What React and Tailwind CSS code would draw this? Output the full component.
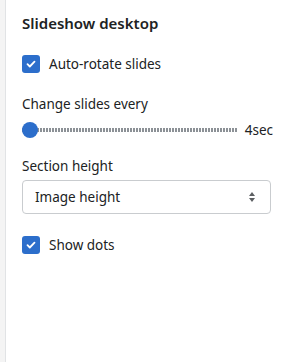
const Check = () => (
  <span className="flex h-[18px] w-[18px] items-center justify-center rounded-[3px] bg-[#2c6ecb]">
    <svg width="12" height="12" viewBox="0 0 12 12" fill="none">
      <path d="M2.5 6.2l2.3 2.3 4.7-4.8" stroke="white" strokeWidth="1.8" strokeLinecap="round" strokeLinejoin="round" />
    </svg>
  </span>
);

export default function App() {
  return (
    <div className="flex h-[362px] w-[287px] bg-white text-[#202223]" style={{ fontFamily: '"Noto Sans", sans-serif' }}>
      <div className="w-[5px] bg-[#f4f4f4]" />
      <div className="w-px bg-[#e1e3e5]" />
      <div className="flex flex-1 flex-col px-4 pt-[13px]">
        <h2 className="text-[15px] font-semibold leading-5">Slideshow desktop</h2>

        <label className="mt-[21px] flex items-center gap-[9px] text-[13.5px] leading-5">
          <Check />
          Auto-rotate slides
        </label>

        <div className="mt-[20px] text-[13.5px] leading-5">Change slides every</div>
        <div className="mt-[6px] flex items-center">
          <div className="relative flex h-4 flex-1 items-center">
            <div className="h-[4px] w-full bg-[repeating-linear-gradient(90deg,#8c9196_0_2px,transparent_2px_3px)]" />
            <span className="absolute left-0 top-0 h-4 w-4 rounded-full bg-[#2c6ecb]" />
          </div>
          <span className="-mr-[2px] ml-2 text-[13.5px] leading-5">4sec</span>
        </div>

        <div className="mt-[16px] text-[13.5px] leading-5">Section height</div>
        <div className="mt-[4px] flex h-[34px] items-center justify-between rounded-[4px] border border-[#c9cccf] pl-3 pr-[14px] text-[13.5px]">
          <span>Image height</span>
          <svg width="8" height="12" viewBox="0 0 8 12" fill="#5c5f62">
            <path d="M4 1l3 4H1z" />
            <path d="M4 11l3-4H1z" />
          </svg>
        </div>

        <label className="mt-[21px] flex items-center gap-[9px] text-[13.5px] leading-5">
          <Check />
          Show dots
        </label>
      </div>
    </div>
  );
}
